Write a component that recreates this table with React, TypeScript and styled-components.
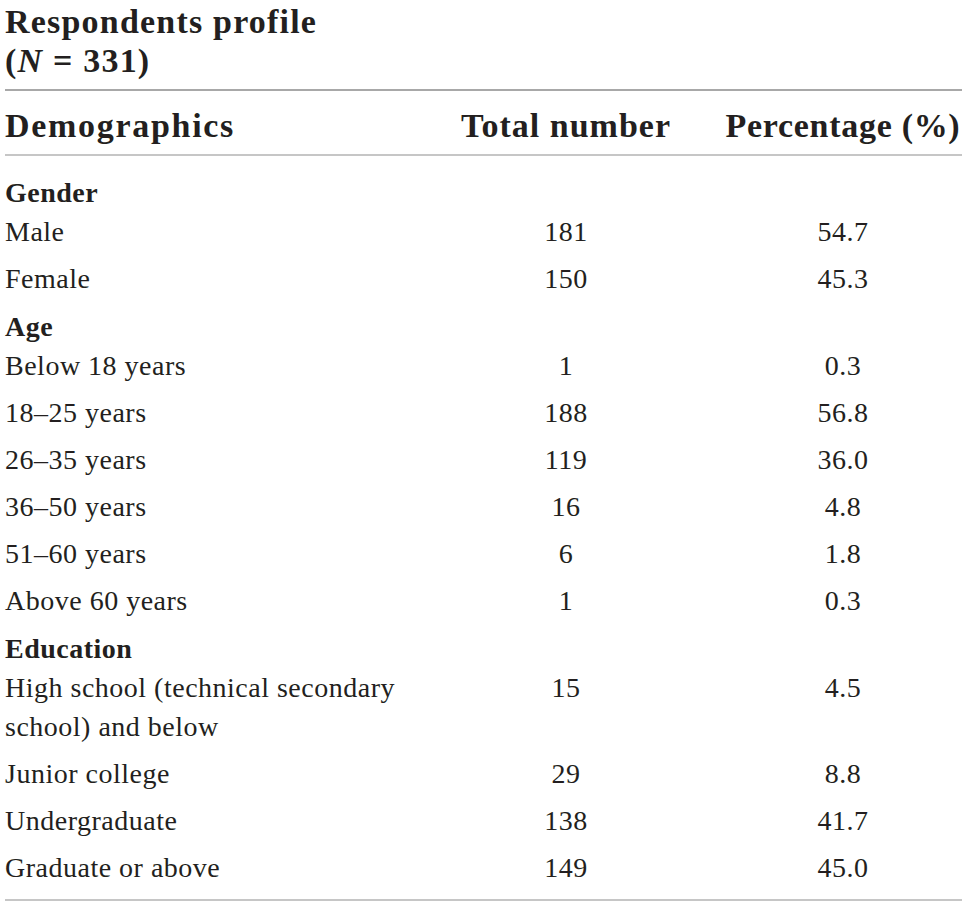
import React from "react";
import styled, { createGlobalStyle } from "styled-components";

const Global = createGlobalStyle`
  html, body { margin: 0; padding: 0; background: #ffffff; }
  body { font-family: "Liberation Serif", "Times New Roman", serif; color: #231f20; }
`;

const Page = styled.div`
  padding: 2px 6px 0 5px;
  width: 957px;
`;

const Title = styled.h1`
  margin: 0 0 9px 0;
  font-size: 34px;
  line-height: 39px;
  font-weight: 700;
  letter-spacing: 1.2px;
`;

const Table = styled.div`
  display: flex;
  flex-direction: column;
  border-top: 2px solid #a8a8a8;
  border-bottom: 2px solid #c6c6c6;
`;

const Head = styled.div`
  display: grid;
  grid-template-columns: 448px 226px 283px;
  padding: 15px 0 9px;
  border-bottom: 2px solid #c6c6c6;
  font-size: 34px;
  line-height: 39px;
  font-weight: 700;
  letter-spacing: 1px;
  white-space: nowrap;
`;

const HeadLabel = styled.span<{ $wide?: boolean; $tight?: boolean }>`
  letter-spacing: ${(p) => (p.$wide ? "1.7px" : p.$tight ? "0.7px" : "1px")};
`;

const Body = styled.div`
  display: flex;
  flex-direction: column;
  padding: 16px 0 4px;
`;

const Row = styled.div<{ $group?: boolean }>`
  display: grid;
  grid-template-columns: 448px 226px 283px;
  font-size: 28px;
  line-height: 39px;
  letter-spacing: 0.5px;
  font-weight: ${(p) => (p.$group ? 700 : 400)};
  padding: ${(p) => (p.$group ? "1px 0 0" : "0 0 8px")};
`;

const Cell = styled.div<{ $col: 1 | 2 | 3 }>`
  text-align: ${(p) => (p.$col === 1 ? "left" : "center")};
  padding-left: ${(p) => (p.$col === 3 ? "45px" : "0")};
  white-space: ${(p) => (p.$col === 1 ? "normal" : "nowrap")};
`;

type Item = { label: string; total?: string; pct?: string; group?: boolean };

const rows: Item[] = [
  { label: "Gender", group: true },
  { label: "Male", total: "181", pct: "54.7" },
  { label: "Female", total: "150", pct: "45.3" },
  { label: "Age", group: true },
  { label: "Below 18 years", total: "1", pct: "0.3" },
  { label: "18–25 years", total: "188", pct: "56.8" },
  { label: "26–35 years", total: "119", pct: "36.0" },
  { label: "36–50 years", total: "16", pct: "4.8" },
  { label: "51–60 years", total: "6", pct: "1.8" },
  { label: "Above 60 years", total: "1", pct: "0.3" },
  { label: "Education", group: true },
  { label: "High school (technical secondary school) and below", total: "15", pct: "4.5" },
  { label: "Junior college", total: "29", pct: "8.8" },
  { label: "Undergraduate", total: "138", pct: "41.7" },
  { label: "Graduate or above", total: "149", pct: "45.0" },
];

export default function App() {
  return (
    <>
      <Global />
      <Page>
        <Title>
          Respondents profile
          <br />(<i>N</i> = 331)
        </Title>
        <Table>
          <Head>
            <Cell $col={1}>
              <HeadLabel $wide>Demographics</HeadLabel>
            </Cell>
            <Cell $col={2}>
              <HeadLabel>Total number</HeadLabel>
            </Cell>
            <Cell $col={3}>
              <HeadLabel $tight>Percentage (%)</HeadLabel>
            </Cell>
          </Head>
          <Body>
            {rows.map((r) => (
              <Row key={r.label} $group={r.group}>
                <Cell $col={1}>{r.label}</Cell>
                <Cell $col={2}>{r.total ?? ""}</Cell>
                <Cell $col={3}>{r.pct ?? ""}</Cell>
              </Row>
            ))}
          </Body>
        </Table>
      </Page>
    </>
  );
}
